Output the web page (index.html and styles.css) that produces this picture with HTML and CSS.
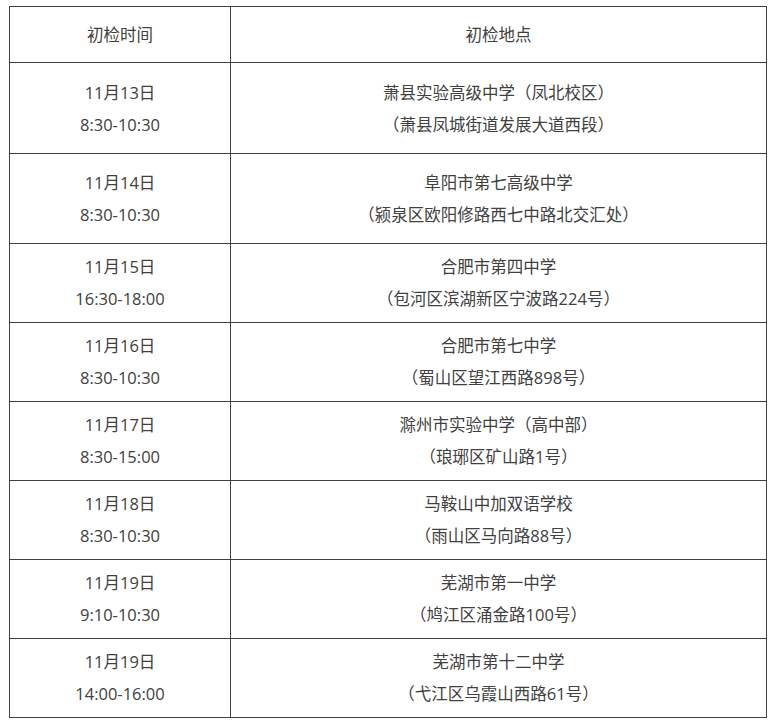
FILE: index.html
```html
<!DOCTYPE html>
<html lang="zh-CN">
<head>
<meta charset="utf-8">
<title>初检安排</title>
<link rel="stylesheet" href="styles.css">
</head>
<body>
<table class="sched">
  <colgroup><col class="c-time"><col class="c-place"></colgroup>
  <thead>
    <tr class="head"><th>初检时间</th><th>初检地点</th></tr>
  </thead>
  <tbody>
    <tr class="r-tall r-first"><td><div>11月13日</div><div>8:30-10:30</div></td><td><div>萧县实验高级中学（凤北校区）</div><div>（萧县凤城街道发展大道西段）</div></td></tr>
    <tr class="r-tall"><td><div>11月14日</div><div>8:30-10:30</div></td><td><div>阜阳市第七高级中学</div><div>（颍泉区欧阳修路西七中路北交汇处）</div></td></tr>
    <tr class="r"><td><div>11月15日</div><div>16:30-18:00</div></td><td><div>合肥市第四中学</div><div>（包河区滨湖新区宁波路224号）</div></td></tr>
    <tr class="r"><td><div>11月16日</div><div>8:30-10:30</div></td><td><div>合肥市第七中学</div><div>（蜀山区望江西路898号）</div></td></tr>
    <tr class="r"><td><div>11月17日</div><div>8:30-15:00</div></td><td><div>滁州市实验中学（高中部）</div><div>（琅琊区矿山路1号）</div></td></tr>
    <tr class="r"><td><div>11月18日</div><div>8:30-10:30</div></td><td><div>马鞍山中加双语学校</div><div>（雨山区马向路88号）</div></td></tr>
    <tr class="r"><td><div>11月19日</div><div>9:10-10:30</div></td><td><div>芜湖市第一中学</div><div>（鸠江区涌金路100号）</div></td></tr>
    <tr class="r"><td><div>11月19日</div><div>14:00-16:00</div></td><td><div>芜湖市第十二中学</div><div>（弋江区乌霞山西路61号）</div></td></tr>
  </tbody>
</table>
</body>
</html>
```
FILE: styles.css
```css
html, body {
  margin: 0;
  padding: 0;
  background: #ffffff;
}
body {
  font-family: "Open Sans", "Noto Sans CJK SC", sans-serif;
  font-size: 16.5px;
  color: #404040;
}
.sched {
  border-collapse: collapse;
  width: 758px;
  margin: 6px 0 0 9px;
  table-layout: fixed;
}
.c-time { width: 221px; }
.sched th,
.sched td {
  border: 1px solid #404040;
  text-align: center;
  vertical-align: middle;
  padding: 0;
  font-weight: normal;
  line-height: 32px;
}
.head th { height: 55px; }
.r-tall td { height: 89px; }
.r-first td { padding-top: 2px; height: 88px; }
.r td { height: 78px; }
```
